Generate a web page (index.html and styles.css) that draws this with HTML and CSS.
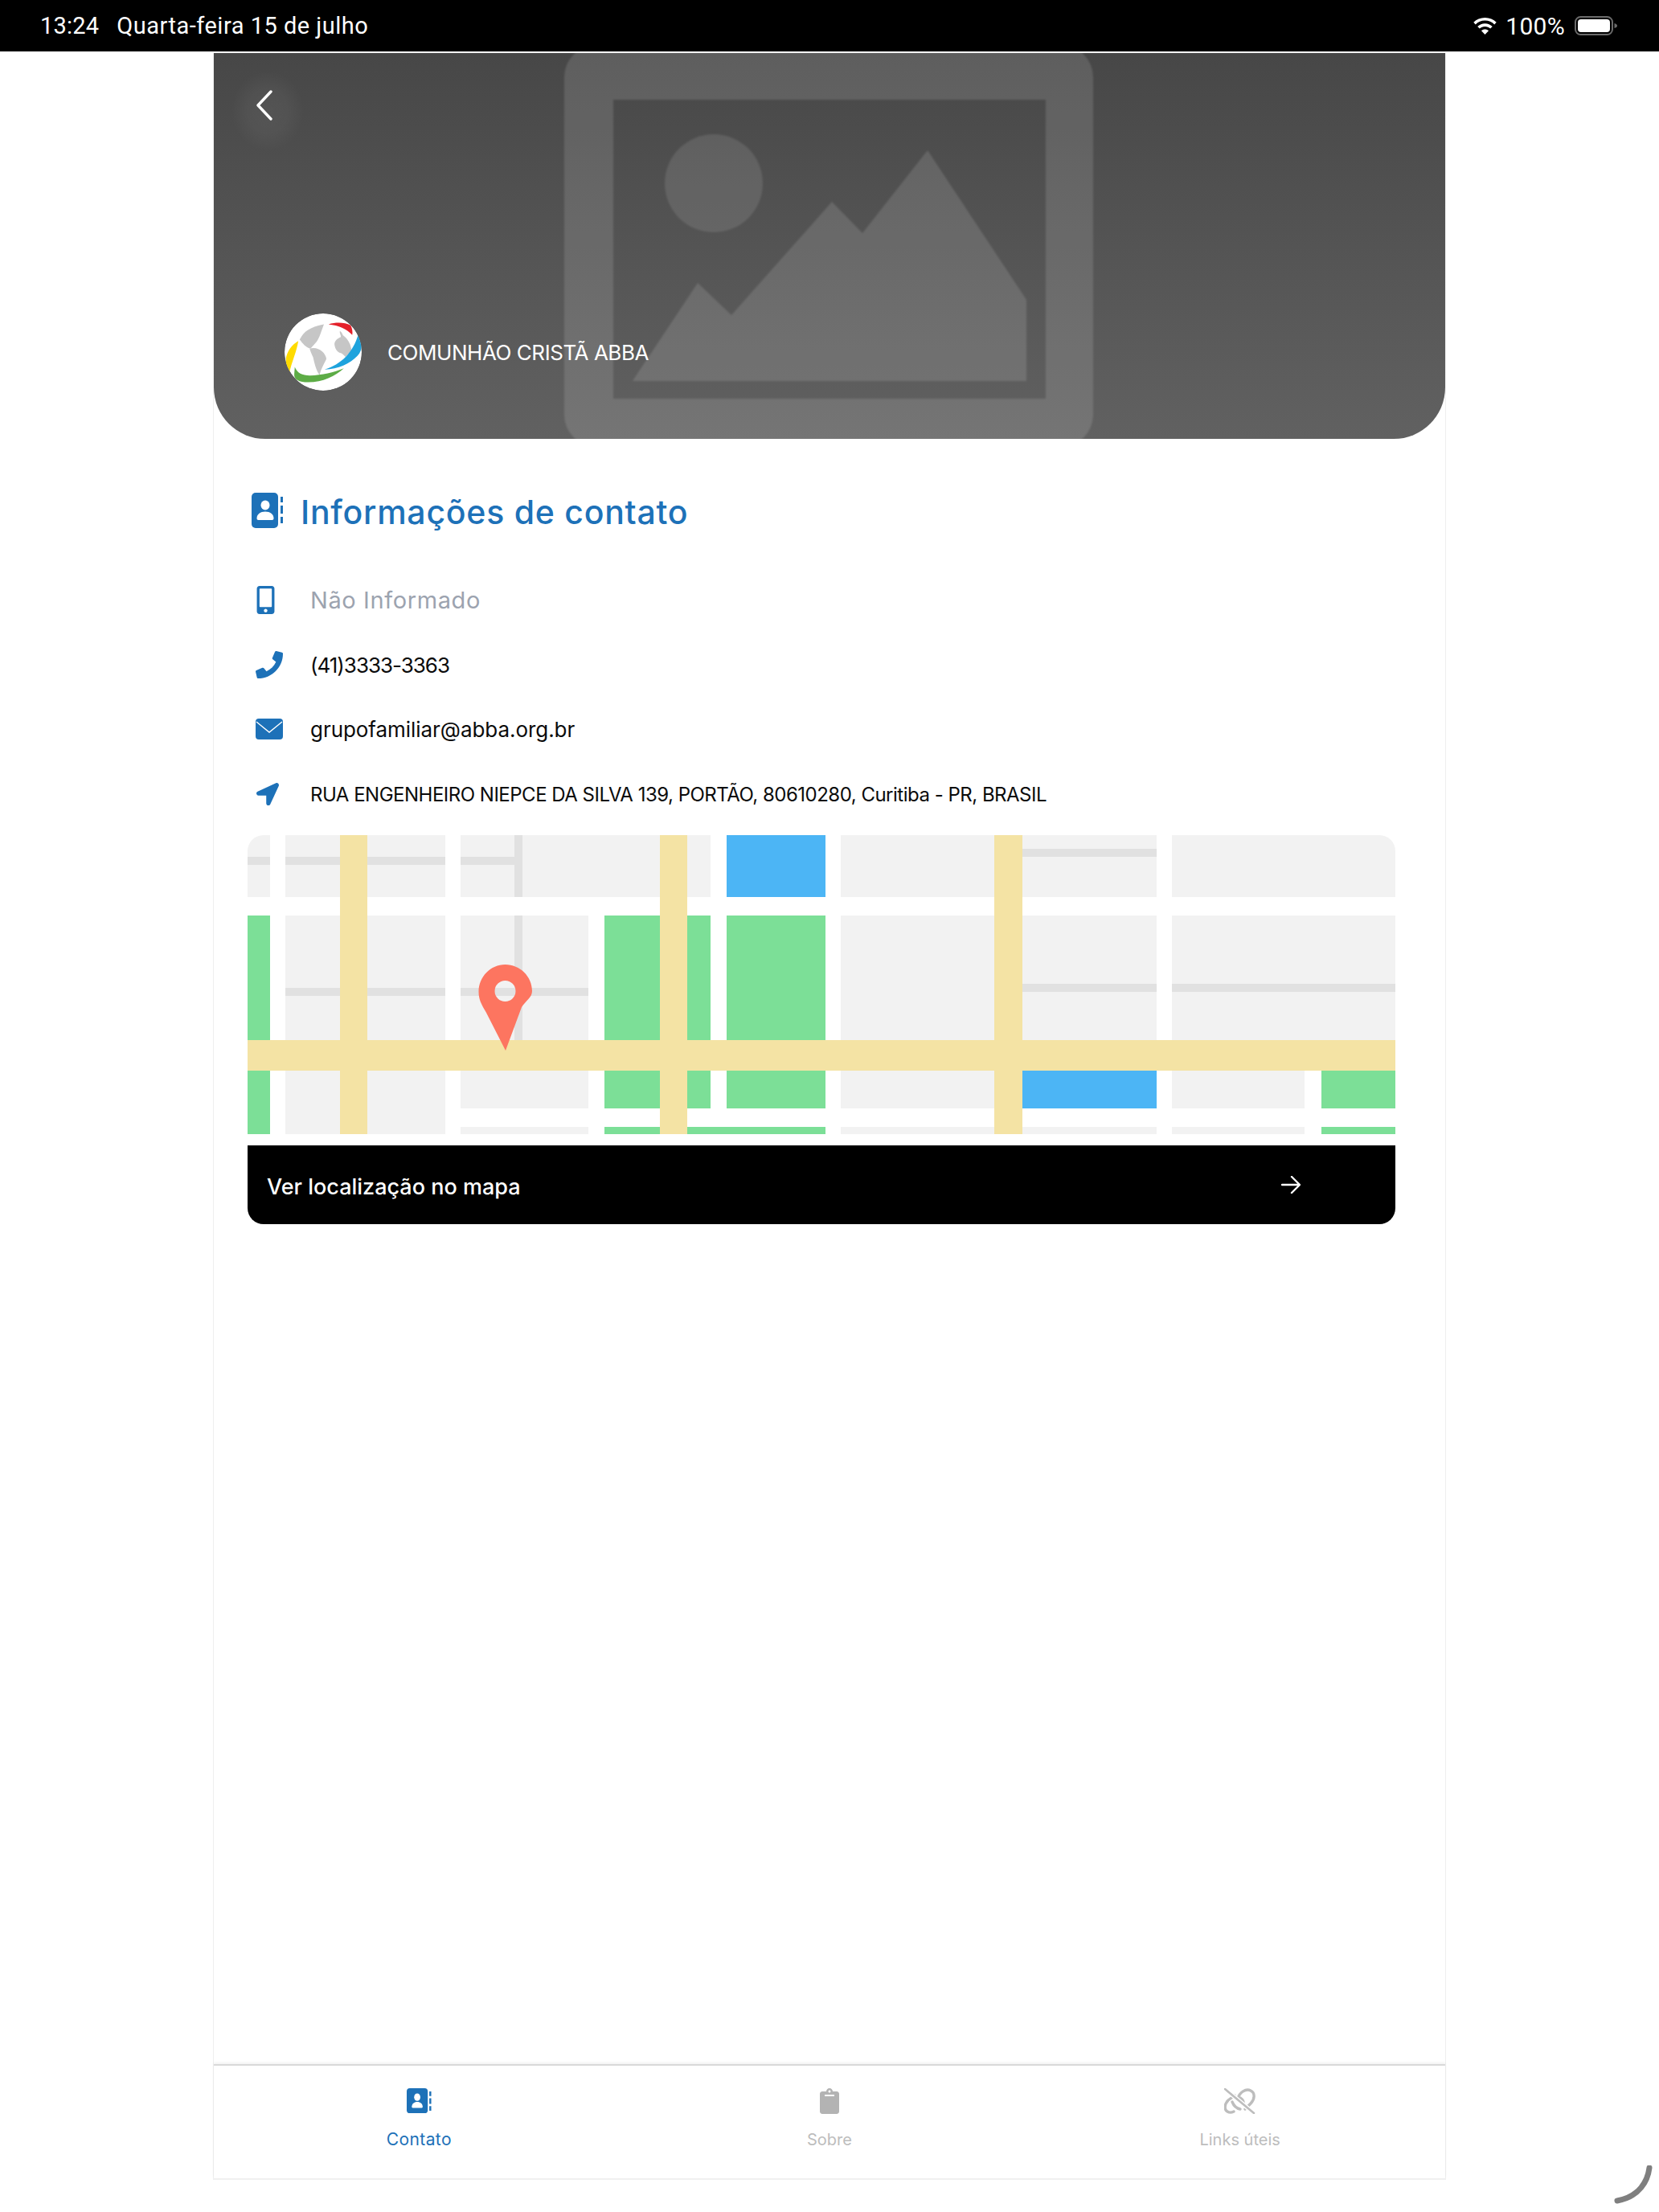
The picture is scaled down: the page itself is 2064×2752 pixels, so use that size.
FILE: index.html
```html
<!DOCTYPE html>
<html lang="pt-BR">
<head>
<meta charset="utf-8">
<title>Informações de contato</title>
<link rel="stylesheet" href="styles.css">
</head>
<body>
<header class="status">
  <div class="status-left"><span>13:24</span><span class="status-date">Quarta-feira 15 de julho</span></div>
  <div class="status-right">
    <svg class="wifi" viewBox="0.8 0 26.4 19.5"><path d="M14 0C8.800 0 4.200 2 .8 5.400l2.300 2.400C5.900 5 9.800 3.300 14 3.300s8.100 1.700 10.900 4.500l2.300-2.400C23.800 2 19.200 0 14 0z"/><path d="M14 6.700c-3.300 0-6.300 1.300-8.600 3.500l2.400 2.400c1.600-1.600 3.800-2.500 6.200-2.500s4.600.9 6.200 2.500l2.400-2.400C20.300 8 17.300 6.700 14 6.700z"/><path d="M14 13.400c-1.600 0-3.100.6-4.200 1.700L14 19.500l4.200-4.400c-1.100-1.100-2.600-1.700-4.200-1.700z"/></svg>
    <span class="status-pct">100%</span>
    <svg class="battery" viewBox="0 0 53 24"><rect x="1" y="1" width="46" height="22" rx="6.500" fill="none" stroke="#6b6b6b" stroke-width="2"/><rect x="4" y="4" width="40" height="16" rx="4" fill="#fff"/><path d="M49.500 9c2 .5 3.500 1.500 3.500 3s-1.500 2.500-3.500 3z" fill="#6b6b6b"/></svg>
  </div>
</header>

<main class="panel">
  <section class="hero">
    <svg class="hero-art" viewBox="266 66 1532 480" preserveAspectRatio="none">
      <defs>
        <linearGradient id="hg" x1="0" y1="0" x2="0" y2="1"><stop offset="0" stop-color="#474747"/><stop offset="1" stop-color="#616161"/></linearGradient>
        <filter id="soft"><feGaussianBlur stdDeviation="1.200"/></filter>
      </defs>
      <rect x="266" y="66" width="1532" height="480" fill="url(#hg)"/>
      <g filter="url(#soft)">
        <path fill="#fff" fill-opacity=".125" fill-rule="evenodd" d="M742 56h578a40 40 0 0 1 40 40v420a40 40 0 0 1-40 40H742a40 40 0 0 1-40-40V96a40 40 0 0 1 40-40zM763 124v372h538V124z"/>
        <circle cx="888" cy="228" r="61" fill="#fff" fill-opacity=".105"/>
        <path fill="#fff" fill-opacity=".125" d="M787 474L868 352L910 392L1035 251L1073 290L1154 187L1277 373V474z"/>
      </g>
    </svg>
    <div class="hero-inner">
      <button class="back" aria-label="Voltar"><svg viewBox="0 0 20 38"><path d="M18 2L2 19l16 17" fill="none" stroke="#fff" stroke-width="3.400" stroke-linecap="round" stroke-linejoin="round"/></svg></button>
      <div class="brand">
        <svg class="logo" viewBox="42 60 286 286">
          <circle cx="185" cy="203" r="143" fill="#fff"/>
          <path fill="#c6c6c6" d="M188 100C160 104 120 118 105 145L98 157C110 172 120 186 138 190L160 166C172 150 178 125 188 100z"/>
          <path fill="#c6c6c6" d="M135 190C165 180 195 205 197 228C190 245 178 262 172 288C158 270 152 240 148 222C142 210 138 200 135 190z"/>
          <path fill="#c6c6c6" d="M247 125c8 4 9 12 12 16 10 6 20 18 26 34 4 12 6 22 6 28-8 4-16 12-24 18-4-6-10-14-22-16-12-6-16-18-18-30 0-14 10-22 24-28 0-8-6-14-4-22z"/>
          <path fill="#e4202a" d="M205 100c30-9 60-7 82 4 6 12 8 24 6 36-22-24-50-36-88-40z"/>
          <path fill="#1ea3dd" d="M316 135c16 30 16 62-4 82-28 30-70 48-122 51 62-20 106-62 126-133z"/>
          <path fill="#ffdb00" d="M93 162c-6 40-24 76-33 118-10-18-14-36-13-52 4-28 22-52 46-66z"/>
          <path fill="#5dac46" d="M80 258c8 22 28 32 56 32 46-2 88-12 126-27-32 28-78 52-132 52-34 0-54-10-52-30z"/>
        </svg>
        <span class="brand-name">COMUNHÃO CRISTÃ ABBA</span>
      </div>
    </div>
  </section>

  <section class="content">
    <h1 class="title">
      <svg class="title-icon" viewBox="0 0 40 44"><rect width="33" height="44" rx="5" fill="#1d71b8"/><ellipse cx="17" cy="15.500" rx="5.500" ry="6" fill="#fff"/><path d="M6.500 32c0-5.500 4.500-8.500 10.500-8.500s10.500 3 10.500 8.500c0 1-.7 2-2 2h-17c-1.300 0-2-1-2-2z" fill="#fff"/><path d="M36 5h3v7h-3zM36 16h3v10h-3zM36 30h3v8h-3z" fill="#1d71b8"/></svg>
      <span class="title-text">Informações de contato</span>
    </h1>
    <ul class="rows">
      <li class="row muted"><span class="row-icon"><svg class="i-mobile" viewBox="0 0 320 512"><path d="M272 0H48C21.500 0 0 21.500 0 48v416c0 26.500 21.500 48 48 48h224c26.500 0 48-21.500 48-48V48c0-26.500-21.500-48-48-48zM160 480c-17.700 0-32-14.300-32-32s14.300-32 32-32 32 14.300 32 32-14.300 32-32 32zm112-108c0 6.600-5.400 12-12 12H60c-6.600 0-12-5.400-12-12V60c0-6.600 5.400-12 12-12h200c6.600 0 12 5.400 12 12v312z"/></svg></span><span class="row-text">Não Informado</span></li>
      <li class="row phone"><span class="row-icon"><svg class="i-phone" viewBox="0 0 512 512"><path d="M493.400 24.600l-104-24c-11.300-2.600-22.900 3.300-27.500 13.900l-48 112c-4.200 9.800-1.400 21.300 6.900 28l60.600 49.600c-36 76.700-98.900 140.500-177.200 177.200l-49.600-60.600c-6.800-8.300-18.200-11.100-28-6.900l-112 48C3.900 366.500-2 378.100.6 389.400l24 104C27.100 504.200 36.700 512 48 512c256.100 0 464-207.500 464-464 0-11.200-7.700-20.900-18.600-23.400z"/></svg></span><span class="row-text">(41)3333-3363</span></li>
      <li class="row"><span class="row-icon"><svg class="i-mail" viewBox="0 0 34 26"><rect width="34" height="26" rx="4"/><path d="M1 4l16 13L33 4" fill="none" stroke="#fff" stroke-width="1.400"/></svg></span><span class="row-text">grupofamiliar@abba.org.br</span></li>
      <li class="row small"><span class="row-icon"><svg class="i-arrow" viewBox="0 0 512 512"><path d="M444.520 3.520L28.740 195.420c-47.970 22.390-31.980 92.750 19.190 92.750h175.910v175.910c0 51.170 70.360 67.170 92.750 19.190l191.900-415.780c15.990-38.390-25.590-79.970-63.970-63.970z"/></svg></span><span class="row-text">RUA ENGENHEIRO NIEPCE DA SILVA 139, PORTÃO, 80610280, Curitiba - PR, BRASIL</span></li>
    </ul>

    <div class="map-card">
      <svg class="map" viewBox="308 1038 1428 372">
        <rect x="308" y="1038" width="1428" height="372" fill="#fff"/>
        <g fill="#f2f2f2">
          <rect x="308" y="1038" width="28" height="77"/>
          <rect x="355" y="1038" width="199" height="77"/>
          <rect x="573" y="1038" width="311" height="77"/>
          <rect x="1046" y="1038" width="393" height="77"/>
          <rect x="1458" y="1038" width="278" height="77"/>
          <rect x="355" y="1138" width="199" height="240"/>
          <rect x="573" y="1138" width="159" height="240"/>
          <rect x="1046" y="1138" width="393" height="240"/>
          <rect x="1458" y="1138" width="278" height="155"/>
          <rect x="1458" y="1331" width="165" height="47"/>
          <rect x="355" y="1331" width="199" height="79"/>
          <rect x="573" y="1401" width="159" height="9"/>
          <rect x="1046" y="1401" width="393" height="9"/>
          <rect x="1458" y="1401" width="165" height="9"/>
        </g>
        <g fill="#e1e1e1">
          <rect x="308" y="1065" width="28" height="10"/>
          <rect x="355" y="1065" width="199" height="10"/>
          <rect x="573" y="1065" width="67" height="10"/>
          <rect x="640" y="1038" width="10" height="77"/>
          <rect x="640" y="1138" width="10" height="155"/>
          <rect x="355" y="1228" width="199" height="10"/>
          <rect x="573" y="1228" width="159" height="10"/>
          <rect x="1272" y="1055" width="167" height="10"/>
          <rect x="1272" y="1223" width="167" height="10"/>
          <rect x="1458" y="1223" width="278" height="10"/>
        </g>
        <g fill="#7cdf97">
          <rect x="308" y="1138" width="28" height="272"/>
          <rect x="752" y="1138" width="132" height="240"/>
          <rect x="904" y="1138" width="123" height="240"/>
          <rect x="752" y="1401" width="275" height="9"/>
          <rect x="1644" y="1331" width="92" height="47"/>
          <rect x="1644" y="1401" width="92" height="9"/>
        </g>
        <g fill="#4cb5f5">
          <rect x="904" y="1038" width="123" height="77"/>
          <rect x="1272" y="1331" width="167" height="47"/>
        </g>
        <g fill="#f4e3a4">
          <rect x="423" y="1038" width="34" height="372"/>
          <rect x="821" y="1038" width="34" height="372"/>
          <rect x="1237" y="1038" width="35" height="372"/>
          <rect x="308" y="1293" width="1428" height="38"/>
        </g>
        <path fill="#fd7560" fill-rule="evenodd" d="M628.500 1199c-18 0-33 15-33 34 0 9 3 15 9 25l24.500 48 20-54c5-8 13-12 13-20 0-18-15-33-33.500-33zm0 20a13 13 0 1 1 0 26 13 13 0 0 1 0-26z"/>
      </svg>
      <a class="map-link" href="#">
        <span>Ver localização no mapa</span>
        <svg class="map-arrow" viewBox="0 0 24 22"><path d="M1 11h21M13 1l10 10-10 10" fill="none" stroke="#fff" stroke-width="2.400" stroke-linecap="round" stroke-linejoin="round"/></svg>
      </a>
    </div>
  </section>

  <nav class="tabs">
    <a class="tab active" href="#">
      <svg class="tab-icon" viewBox="0 0 32 33"><rect width="27" height="32" rx="4"/><ellipse cx="13.500" cy="11.500" rx="4" ry="4.800" fill="#fff"/><path d="M6.500 24c0-4 3-6.500 7-6.500s7 2.500 7 6.500c0 .7-.5 1.200-1.200 1.200H7.700c-.7 0-1.200-.5-1.200-1.200z" fill="#fff"/><path d="M29 4h2.500v6H29zM29 13h2.500v7H29zM29 23h2.500v6H29z"/></svg>
      <span>Contato</span>
    </a>
    <a class="tab" href="#">
      <svg class="tab-icon" viewBox="0 0 384 512" ><path d="M384 112v352c0 26.510-21.490 48-48 48H48c-26.510 0-48-21.490-48-48V112c0-26.510 21.490-48 48-48h80c0-35.290 28.710-64 64-64s64 28.710 64 64h80c26.510 0 48 21.490 48 48zM192 40c-13.255 0-24 10.745-24 24s10.745 24 24 24 24-10.745 24-24-10.745-24-24-24m96 114v-20a6 6 0 0 0-6-6H102a6 6 0 0 0-6 6v20a6 6 0 0 0 6 6h180a6 6 0 0 0 6-6z"/></svg>
      <span>Sobre</span>
    </a>
    <a class="tab" href="#">
      <svg class="tab-icon" viewBox="0 0 40 32"><g fill="none" stroke="currentColor" stroke-width="3.400" stroke-linecap="round"><path d="M17 13C19 5 27 0 33 3C39 6 38 14 33 19L26 26"/><path d="M13 9L5 15C0 20 0 27 4 29C7 31 10 30 12 29"/><path d="M10 17C12 22 15 25 20 26"/><path d="M20 12C23 14 25 17 24 21"/></g><path d="M1 1l36 30" fill="none" stroke="#fff" stroke-width="5.500"/><path d="M1 1l36 30" fill="none" stroke="currentColor" stroke-width="2.600" stroke-linecap="round"/></svg>
      <span>Links úteis</span>
    </a>
  </nav>
</main>

<svg class="pencil" viewBox="0 0 48 48"><path d="M44 3c-2 16-12 36-40 41" fill="none" stroke="#7f7f7f" stroke-width="7" stroke-linecap="round"/></svg>
</body>
</html>
```

FILE: styles.css
```css
* { box-sizing: border-box; }
html, body { margin: 0; padding: 0; }
body {
  width: 2064px;
  height: 2752px;
  background: #fff;
  display: flex;
  flex-direction: column;
  overflow: hidden;
  position: relative;
  font-family: "Inter", "Liberation Sans", sans-serif;
}

.status {
  flex: none;
  height: 64px;
  background: #000;
  color: #fff;
  display: flex;
  align-items: center;
  justify-content: space-between;
  padding: 0 52px 0 50px;
  font-family: "Roboto", sans-serif;
  font-size: 29px;
  letter-spacing: .2px;
}
.status-left { display: flex; gap: 22px; }
.status-date { letter-spacing: .5px; }
.status-right { display: flex; align-items: center; }
.status-pct { margin: 0 12px 0 11px; font-size: 30px; letter-spacing: .3px; }
.wifi { width: 29px; height: 21px; fill: #fff; }
.battery { width: 53px; height: 24px; }

.panel {
  flex: none;
  width: 1534px;
  height: 2646px;
  margin: 2px auto 0;
  border-left: 1px solid #efefef;
  border-right: 1px solid #efefef;
  border-bottom: 2px solid #f0f0f0;
  display: flex;
  flex-direction: column;
}

.hero {
  flex: none;
  height: 480px;
  position: relative;
  border-radius: 0 0 64px 64px;
  overflow: hidden;
}
.hero-art { position: absolute; inset: 0; width: 100%; height: 100%; display: block; }
.hero-inner {
  position: relative;
  height: 100%;
  display: flex;
  flex-direction: column;
  justify-content: space-between;
  padding: 22px 0 60px 22px;
}
.back {
  width: 90px;
  height: 100px;
  border: 0;
  padding: 0 0 14px 0;
  border-radius: 50%;
  background: radial-gradient(closest-side, rgba(255,255,255,.05) 0, rgba(255,255,255,.04) 55%, rgba(255,255,255,0) 100%);
  display: flex;
  align-items: center;
  justify-content: center;
}
.back svg { width: 20px; height: 38px; margin-right: 8px; }
.brand { display: flex; align-items: center; gap: 32px; margin-left: 66px; }
.logo { width: 96px; height: 96px; flex: none; border-radius: 50%; }
.brand-name { color: #fff; font-size: 26px; letter-spacing: -.45px; }

.content {
  flex: none;
  padding: 66px 62px 0 42px;
}
.title {
  margin: 0 0 48px 5px;
  display: flex;
  align-items: center;
  gap: 21px;
  height: 46px;
  color: #1d71b8;
  font-size: 41px;
  font-weight: 500;
  letter-spacing: .75px;
}
.title-icon { width: 40px; height: 44px; flex: none; }
.title-text { padding-top: 4px; }

.rows { list-style: none; margin: 0; padding: 0; }
.row {
  display: flex;
  align-items: center;
  height: 80.5px;
  font-size: 26px;
  color: #0b0b0b;
  letter-spacing: -.05px;
}
.row-text { padding-top: 1px; }
.row.muted { color: #9ca3af; font-size: 29px; letter-spacing: .6px; }
.row.phone { letter-spacing: -1px; }
.row.small { font-size: 24px; letter-spacing: -.5px; }
.row-icon { width: 78px; flex: none; display: flex; padding-left: 10px; }
.row-icon svg { fill: #1d71b8; display: block; }
.i-mobile { width: 23px; height: 35px; margin-left: 1px; }
.i-phone { width: 34px; height: 34px; }
.i-mail { width: 34px; height: 26px; }
.i-arrow { width: 28px; height: 28px; margin-left: 1px; }

.map-card { margin-top: 11px; }
.map {
  display: block;
  width: 1428px;
  height: 372px;
  border-radius: 20px 20px 0 0;
}
.map-link {
  margin-top: 14px;
  height: 98px;
  background: #000;
  border-radius: 0 0 20px 20px;
  color: #fff;
  text-decoration: none;
  display: flex;
  align-items: center;
  justify-content: space-between;
  padding: 5px 118px 0 24px;
  font-size: 27px;
  font-weight: 500;
}
.map-arrow { width: 24px; height: 22px; margin-top: -5px; }

.tabs {
  margin-top: auto;
  height: 142px;
  border-top: 2px solid #d9d9d9;
  box-shadow: 0 -2px 3px rgba(0,0,0,.05);
  display: grid;
  grid-template-columns: repeat(3, 1fr);
}
.tab {
  display: flex;
  flex-direction: column;
  align-items: center;
  padding-top: 28px;
  color: #bdbdbd;
  text-decoration: none;
  font-size: 20px;
}
.tab.active { color: #1d71b8; font-size: 21px; letter-spacing: .4px; }
.tab-icon { height: 32px; width: auto; fill: #b3b3b3; color: #bdbdbd; }
.tab.active .tab-icon { fill: #1d71b8; }
.tab span { margin-top: 20px; line-height: 24px; }

.pencil { position: absolute; left: 2008px; top: 2694px; width: 48px; height: 48px; }
```
